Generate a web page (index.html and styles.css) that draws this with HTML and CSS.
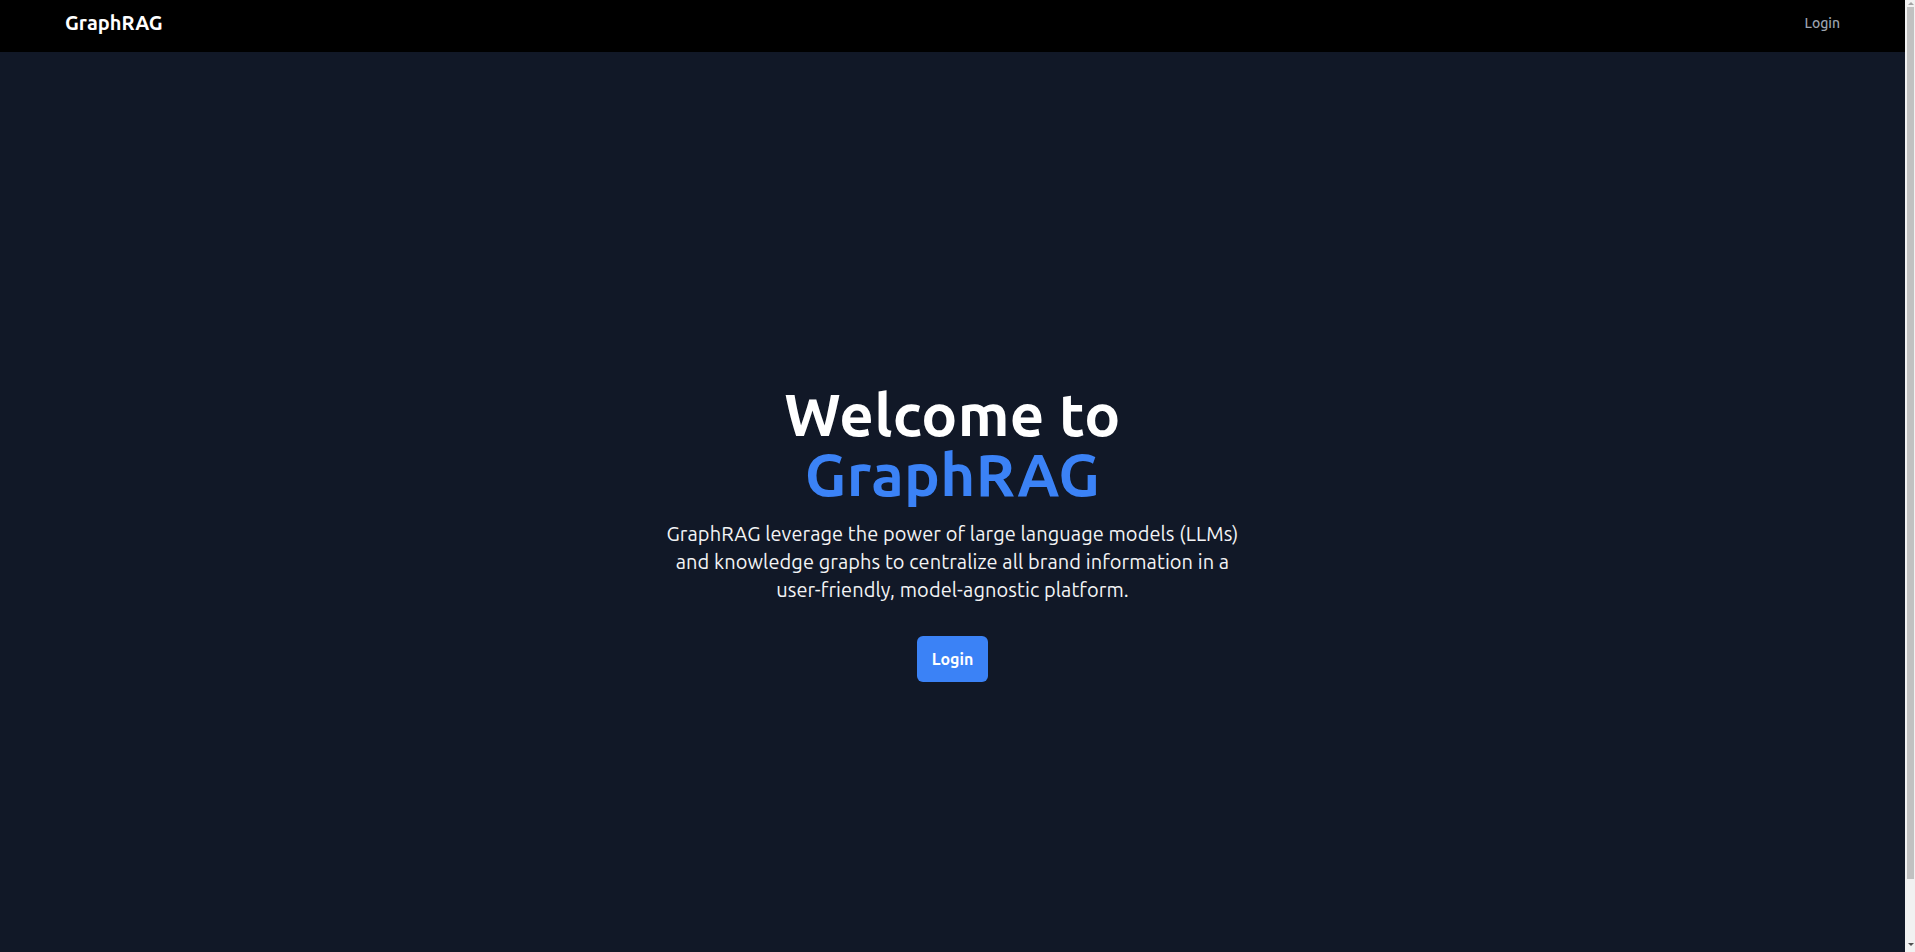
FILE: index.html
```
<!DOCTYPE html>
<html lang="en">
<head>
<meta charset="utf-8">
<title>GraphRAG</title>
<link rel="stylesheet" href="styles.css">
</head>
<body>
<div class="page">
  <header class="navbar">
    <a class="brand" href="#">GraphRAG</a>
    <nav class="nav-links">
      <a class="nav-link" href="#">Login</a>
    </nav>
  </header>
  <main class="hero">
    <div class="hero-content">
      <h1 class="hero-title"><span class="line">Welcome to</span><span class="line accent">GraphRAG</span></h1>
      <p class="hero-text">GraphRAG leverage the power of large language models (LLMs) and knowledge graphs to centralize all brand information in a user-friendly, model-agnostic platform.</p>
      <a class="btn-primary" href="#">Login</a>
    </div>
  </main>
</div>
<div class="scrollbar" aria-hidden="true">
  <span class="arrow arrow-up"></span>
  <span class="thumb"></span>
  <span class="arrow arrow-down"></span>
</div>
</body>
</html>
```
FILE: styles.css
```
* { box-sizing: border-box; }
html, body { margin: 0; padding: 0; }
body {
  font-family: "Ubuntu", "Open Sans", sans-serif;
  background: #111827;
  color: #ffffff;
}
a { text-decoration: none; }
.page {
  margin-right: 10px;
}
.navbar {
  height: 52px;
  background: #000000;
  display: flex;
  align-items: flex-start;
  justify-content: space-between;
  padding: 9px 65px 0 65px;
}
.brand {
  color: #ffffff;
  font-size: 20px;
  font-weight: 700;
  line-height: 28px;
}
.nav-links {
  height: 28px;
  display: flex;
  align-items: center;
}
.nav-link {
  color: #9ca3af;
  font-size: 14px;
  font-weight: 500;
  line-height: 20px;
}
.hero {
  min-height: 100vh;
  display: flex;
  align-items: center;
  justify-content: center;
  padding-top: 9px;
}
.hero-content {
  display: flex;
  flex-direction: column;
  align-items: center;
  text-align: center;
}
.hero-title {
  margin: 0 0 16px;
  display: flex;
  flex-direction: column;
  align-items: center;
  font-size: 60px;
  font-weight: 700;
  letter-spacing: 0.3px;
  color: #ffffff;
}
.hero-title .line {
  display: block;
  height: 60px;
  line-height: 60px;
}
.accent { color: #3b82f6; }
.hero-text {
  margin: 0;
  max-width: 580px;
  font-size: 20px;
  line-height: 28px;
  letter-spacing: 0.08px;
  color: #f3f4f6;
}
.btn-primary {
  margin-top: 32px;
  display: inline-flex;
  align-items: center;
  justify-content: center;
  height: 46px;
  padding: 0 15px;
  background: #3b82f6;
  color: #ffffff;
  font-size: 16px;
  font-weight: 700;
  border-radius: 6px;
}
.scrollbar {
  position: fixed;
  top: 0;
  right: 0;
  width: 10px;
  height: 100vh;
  background: #f1f1f1;
  display: flex;
  flex-direction: column;
  align-items: flex-end;
}
.thumb {
  display: block;
  width: 7px;
  height: 872px;
  margin: 2px 1px 0 0;
  background: #c1c1c1;
}
.arrow {
  display: block;
  width: 0;
  height: 0;
  margin-right: 1px;
  border-left: 3.5px solid transparent;
  border-right: 3.5px solid transparent;
}
.arrow-up {
  margin-top: 2px;
  border-bottom: 3px solid #a3a3a3;
}
.arrow-down {
  margin-top: auto;
  margin-bottom: 6px;
  border-top: 3px solid #505050;
}
```
